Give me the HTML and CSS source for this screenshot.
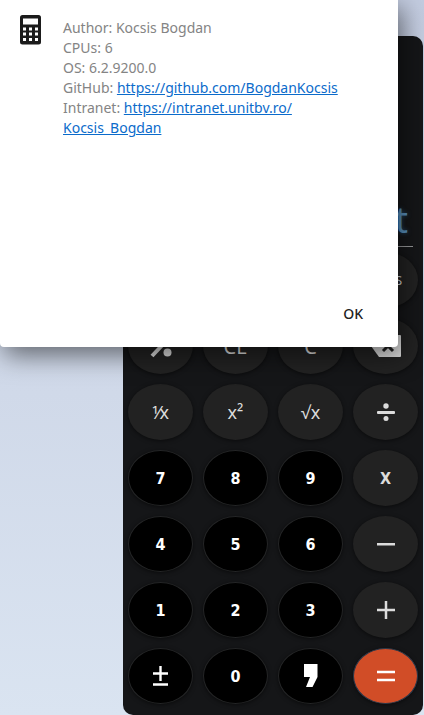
FILE: index.html
```html
<!DOCTYPE html>
<html lang="en">
<head>
<meta charset="utf-8">
<meta name="viewport" content="width=device-width, initial-scale=1">
<title>Calculator</title>
<link rel="stylesheet" href="styles.css">
</head>
<body>
<main class="calculator">
  <output class="display">t</output>
  <div class="keys">
    <button class="key memory" type="button">S</button>
    <button class="key" type="button" aria-label="Percent"><svg width="24" height="24" viewBox="0 0 24 24"><path d="M3 22 20 4" stroke="currentColor" stroke-width="4"/><circle cx="6" cy="6" r="4" fill="currentColor"/><circle cx="18.5" cy="18.5" r="4" fill="currentColor"/></svg></button>
    <button class="key clear" type="button">CE</button>
    <button class="key clear" type="button">C</button>
    <button class="key" type="button" aria-label="Backspace"><svg width="30" height="24" viewBox="0 0 30 24"><path d="M8 1H29Q30 1 30 2V22Q30 23 29 23H8L0 12Z" fill="currentColor"/><path d="M12 7 22 17M22 7 12 17" stroke="#222" stroke-width="3"/></svg></button>

    <button class="key" type="button" aria-label="Reciprocal">⅟x</button>
    <button class="key" type="button">x²</button>
    <button class="key" type="button">√x</button>
    <button class="key" type="button" aria-label="Divide"><svg width="18" height="18" viewBox="0 0 18 18" fill="currentColor"><rect y="8" width="18" height="3" rx="1"/><circle cx="9" cy="3" r="2.7"/><circle cx="9" cy="15.5" r="2.5"/></svg></button>

    <button class="key digit" type="button">7</button>
    <button class="key digit" type="button">8</button>
    <button class="key digit" type="button">9</button>
    <button class="key narrow" type="button">X</button>

    <button class="key digit" type="button">4</button>
    <button class="key digit" type="button">5</button>
    <button class="key digit" type="button">6</button>
    <button class="key" type="button" aria-label="Subtract"><svg width="18" height="18" viewBox="0 0 18 18"><rect y="8" width="18" height="2.5" fill="currentColor"/></svg></button>

    <button class="key digit" type="button">1</button>
    <button class="key digit" type="button">2</button>
    <button class="key digit" type="button">3</button>
    <button class="key" type="button" aria-label="Add"><svg width="18" height="18" viewBox="0 0 18 18"><path d="M0 9H18M9 0V18" stroke="currentColor" stroke-width="2.5"/></svg></button>

    <button class="key digit" type="button" aria-label="Change sign"><svg width="16" height="20" viewBox="0 0 16 20"><path d="M0 7.5H15M7.5 0V15M0 18.5H15" stroke="currentColor" stroke-width="2.4"/></svg></button>
    <button class="key digit" type="button">0</button>
    <button class="key digit" type="button" aria-label="Decimal separator"><svg width="14" height="24" viewBox="0 0 14 24"><path d="M0 0H13.5V13L8.5 23H2L6 13H0Z" fill="currentColor"/></svg></button>
    <button class="key equals" type="button" aria-label="Equals"><svg width="18" height="18" viewBox="0 0 18 18"><path d="M0 5H18M0 13H18" stroke="currentColor" stroke-width="2.5"/></svg></button>
  </div>
</main>
<section class="dialog" role="dialog" aria-label="About">
  <div class="about">
    <svg class="logo" width="22" height="30" viewBox="0 0 22 30"><rect width="21" height="29.5" rx="2.5" fill="#1b1b1b"/><path d="M3 3.5h15v6H3zM3 12.5h3v3H3zM9 12.5h3v3H9zM15 12.5h3v3h-3zM3 17.5h3v3H3zM9 17.5h3v3H9zM15 17.5h3v3h-3zM3 23h3v3H3zM9 23h3v3H9zM15 23h3v3h-3z" fill="#fff"/></svg>
    <div class="details">
      <div>Author: Kocsis Bogdan</div>
      <div>CPUs: 6</div>
      <div>OS: 6.2.9200.0</div>
      <div>GitHub: <a href="https://github.com/BogdanKocsis">https://github.com/BogdanKocsis</a></div>
      <div>Intranet: <a href="https://intranet.unitbv.ro/Kocsis_Bogdan">https://intranet.unitbv.ro/<br>Kocsis_Bogdan</a></div>
    </div>
  </div>
  <button class="ok" type="button">OK</button>
</section>
</body>
</html>
```
FILE: styles.css
```css
* { box-sizing: border-box; }

body {
  margin: 0;
  min-height: 100vh;
  overflow: hidden;
  padding: 36px 1px 0 123px;
  background: linear-gradient(#c3cce0, #d0d9e9 55%, #dae4f1);
  font-family: "Noto Sans", "Open Sans", sans-serif;
}

.calculator {
  padding: 0 5px 11px;
  border-radius: 10px;
  background: #151618;
}

.display {
  display: flex;
  align-items: flex-end;
  justify-content: flex-end;
  height: 211px;
  margin: 0 5px 5px 0;
  padding: 0 5px 1px;
  border-bottom: 1px solid #98999b;
  color: #5a92bf;
  font-size: 36px;
  line-height: 50px;
  text-shadow: 0 0 4px #245078;
}

.keys {
  display: grid;
  grid-template-columns: repeat(4, 1fr);
  grid-auto-rows: 56px;
  gap: 10px;
}

.key {
  display: flex;
  align-items: center;
  justify-content: center;
  padding: 0;
  border: 0;
  border-radius: 50%;
  background: #222;
  color: #dcdcdc;
  font: 18px "Noto Sans", "Open Sans", sans-serif;
  box-shadow: 0 1px 4px #0008;
}

.memory {
  grid-column: 4;
  justify-content: flex-end;
  padding-right: 16px;
  font-size: 12px;
}

.clear { font-size: 20px; }

.digit {
  border: 1px solid #242526;
  background: #000;
  color: #fff;
}

.digit,
.narrow { font: bold 16px "DejaVu Sans Condensed", "Roboto", sans-serif; }

.equals {
  border: 1px solid #29384a;
  background: #d14d27;
  color: #fff;
}

.dialog {
  position: absolute;
  top: 0;
  left: 0;
  right: 26px;
  display: flex;
  flex-direction: column;
  justify-content: space-between;
  min-height: 347px;
  padding: 15px 26px 16px 20px;
  border-radius: 0 0 4px 4px;
  background: #fff;
  box-shadow: 4px 8px 26px #0008;
}

.about {
  display: flex;
  gap: 21px;
}

.logo { flex: none; }

.details {
  padding-top: 3px;
  color: #848484;
  font-size: 14px;
  line-height: 20px;
}

.details a { color: #0b6bcb; }

.ok {
  align-self: flex-end;
  height: 36px;
  padding: 0 9px;
  border: 0;
  background: none;
  color: #222;
  font: 500 14px "Noto Sans", sans-serif;
}
```
